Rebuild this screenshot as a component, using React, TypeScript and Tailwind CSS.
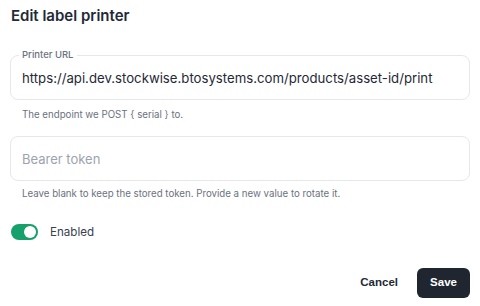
export default function App() {
  return (
    <div
      className="w-[480px] h-[306px] bg-white px-[10px] pt-[6px] text-[#1f2937]"
      style={{ fontFamily: "Inter, 'Liberation Sans', sans-serif" }}
    >
      {/* Title */}
      <h1 className="h-[20px] text-[15px] font-semibold leading-[20px] pl-px">
        Edit label printer
      </h1>

      {/* Printer URL */}
      <div className="relative mt-[29px] h-[45px] w-[460px] rounded-lg border border-[#e5e7eb] flex items-center px-[11px]">
        <span className="absolute -top-[7px] left-[8px] bg-white px-[3px] text-[9.5px] font-medium leading-[12px] text-[#6b7280]">
          Printer URL
        </span>
        <span className="text-[13.2px] leading-[18px] text-[#1f2937]">
          https://api.dev.stockwise.btosystems.com/products/asset-id/print
        </span>
      </div>
      <p className="mt-[8px] pl-[12px] text-[9.7px] leading-[14px] text-[#6b7280]">
        The endpoint we POST {"{"} serial {"}"} to.
      </p>

      {/* Bearer token */}
      <div className="mt-[14px] h-[45px] w-[460px] rounded-lg border border-[#e5e7eb] flex items-center px-[11px]">
        <span className="text-[13px] leading-[18px] text-[#9ca3af]">Bearer token</span>
      </div>
      <p className="mt-[6px] pl-[12px] text-[9.7px] leading-[14px] text-[#6b7280]">
        Leave blank to keep the stored token. Provide a new value to rotate it.
      </p>

      {/* Toggle */}
      <div className="mt-[23px] flex items-center gap-[12px] pl-px">
        <div className="h-[16px] w-[27px] rounded-full bg-[#16a06b] flex items-center justify-end pr-[2px]">
          <div className="h-[12px] w-[12px] rounded-full bg-white" />
        </div>
        <span className="text-[11.6px] leading-[16px] text-[#374151]">Enabled</span>
      </div>

      {/* Actions */}
      <div className="mt-[28px] flex items-center justify-end gap-[19px]">
        <button
          className="text-[11.5px] font-bold text-[#1f2937]"
          style={{ fontFamily: "'Liberation Sans', Arial, sans-serif" }}
        >
          Cancel
        </button>
        <button
          className="h-[30px] w-[53px] rounded-md bg-[#1f2630] text-[11.5px] font-bold text-white"
          style={{ fontFamily: "'Liberation Sans', Arial, sans-serif" }}
        >
          Save
        </button>
      </div>
    </div>
  );
}
